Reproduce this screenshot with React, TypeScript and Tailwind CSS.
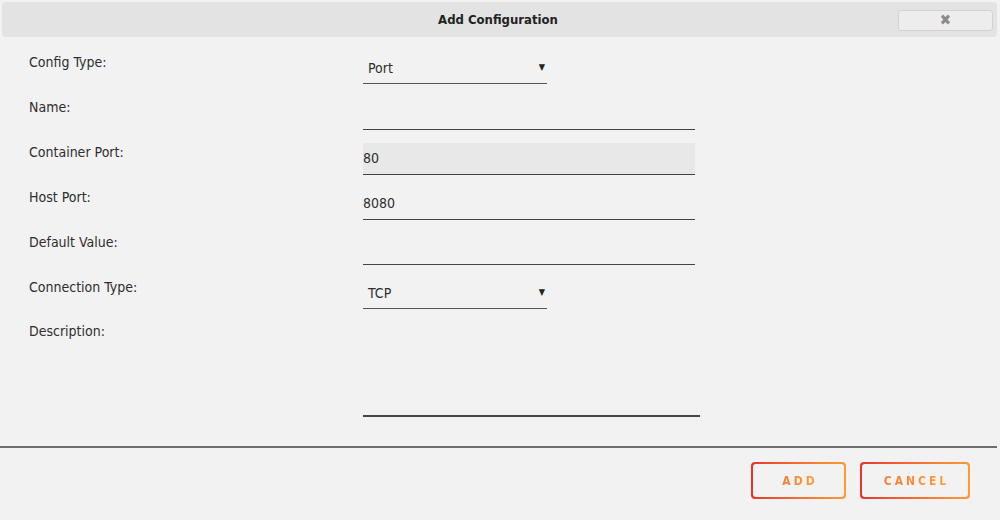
import React from "react";

const labelFont = { fontFamily: '"DejaVu Sans Condensed", "Liberation Sans", sans-serif' };

function Row({ label, children }: { label: string; children?: React.ReactNode }) {
  return (
    <div className="flex h-[45px]">
      <div className="w-[334px] pt-[7px] text-[14px] leading-[20px] text-[#2e2e2e]">{label}</div>
      <div className="pt-[8px]">{children}</div>
    </div>
  );
}

function Select({ value }: { value: string }) {
  return (
    <div className="flex h-[31px] w-[184px] items-center justify-between border-b border-[#555] pl-[5px] pr-[2px] text-[14px] text-[#2e2e2e]">
      <span className="leading-[31px]">{value}</span>
      <span className="text-[9px] text-[#222]">▼</span>
    </div>
  );
}

function TextInput({ value, disabled }: { value?: string; disabled?: boolean }) {
  return (
    <div
      className={`h-[32px] w-[332px] border-b border-[#444] text-[14px] leading-[31px] text-[#2e2e2e] ${
        disabled ? "bg-[#e8e8e8]" : ""
      }`}
    >
      {value}
    </div>
  );
}

function GradButton({ label, w }: { label: string; w: string }) {
  return (
    <div className={`rounded-[4px] bg-gradient-to-r from-[#e8322e] to-[#ff9a35] p-[2px] ${w}`}>
      <div className="flex h-[33px] items-center justify-center rounded-[3px] bg-[#f2f2f2]">
        <span
          className="bg-gradient-to-r from-[#f57a35] to-[#ff9f3a] bg-clip-text pl-[3px] text-[12px] font-bold tracking-[3px] text-transparent"
          style={labelFont}
        >
          {label}
        </span>
      </div>
    </div>
  );
}

export default function App() {
  return (
    <div className="flex h-[520px] w-[1000px] flex-col bg-[#f2f2f2]" style={labelFont}>
      <div className="mx-[2px] mt-[2px] flex h-[35px] w-[995px] items-center rounded-[4px] bg-[#e3e3e3]">
        <div className="flex-1 pl-[96px] text-center text-[13px] font-bold text-[#222]">Add Configuration</div>
        <div className="mr-[4px] mt-[1px] flex h-[21px] w-[95px] items-center justify-center rounded-[3px] border border-[#d2d2d2] bg-[#ededed] text-[15px] font-bold text-[#8a8a8a]">
          ✖
        </div>
      </div>
      <div className="flex flex-col pl-[29px] pt-[8px]">
        <Row label="Config Type:">
          <Select value="Port" />
        </Row>
        <Row label="Name:">
          <TextInput />
        </Row>
        <Row label="Container Port:">
          <TextInput value="80" disabled />
        </Row>
        <Row label="Host Port:">
          <TextInput value="8080" />
        </Row>
        <Row label="Default Value:">
          <TextInput />
        </Row>
        <Row label="Connection Type:">
          <Select value="TCP" />
        </Row>
        <div className="flex h-[103px]">
          <div className="w-[334px] pt-[6px] text-[14px] leading-[20px] text-[#2e2e2e]">Description:</div>
          <div className="pt-[8px]">
            <div className="h-[94px] w-[337px] border-b-2 border-[#444]" />
          </div>
        </div>
      </div>
      <div className="mt-[28px] w-[997px] border-t-2 border-[#6e6e6e]" />
      <div className="flex justify-end gap-[14px] pr-[30px] pt-[14px]">
        <GradButton label="ADD" w="w-[95px]" />
        <GradButton label="CANCEL" w="w-[110px]" />
      </div>
    </div>
  );
}
